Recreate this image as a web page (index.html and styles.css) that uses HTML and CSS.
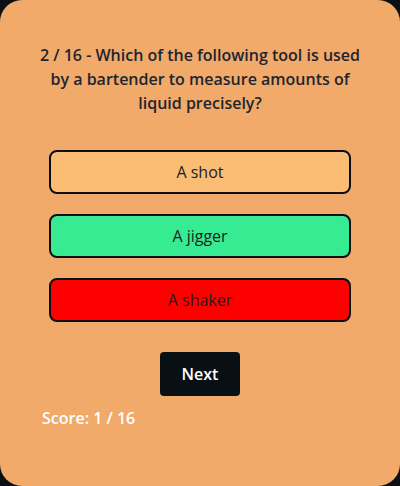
FILE: index.html
```html
<!DOCTYPE html>
<html>
<head>
<meta charset="utf-8">
<link rel="stylesheet" href="styles.css">
</head>
<body>
<div class="card">
  <h1 class="question">2 / 16 - Which of the following tool is used by a bartender to measure amounts of liquid precisely?</h1>
  <div class="options">
    <button class="option neutral">A shot</button>
    <button class="option correct">A jigger</button>
    <button class="option wrong">A shaker</button>
  </div>
  <div class="actions">
    <button class="next">Next</button>
  </div>
  <p class="score">Score: 1 / 16</p>
</div>
</body>
</html>
```
FILE: styles.css
```css
html, body {
  margin: 0;
  padding: 0;
  background: #0a1014;
  height: 100%;
}
body {
  font-family: "Open Sans", "Noto Sans", sans-serif;
}
.card {
  box-sizing: border-box;
  width: 400px;
  height: 486px;
  background: #f1aa6a;
  border-radius: 22px;
  padding: 43px 40px;
}
.question {
  margin: 0;
  font-size: 16px;
  font-weight: 600;
  line-height: 24px;
  text-align: center;
  color: #1d2530;
}
.options {
  display: flex;
  flex-direction: column;
  align-items: center;
  gap: 20px;
  margin-top: 35px;
}
.option {
  box-sizing: border-box;
  width: 302px;
  height: 44px;
  border: 2px solid #0a1014;
  border-radius: 8px;
  font-family: inherit;
  font-size: 16px;
  color: #1a1f26;
}
.neutral { background: #fbbc74; }
.correct { background: #36eb91; }
.wrong { background: #ff0000; }
.actions {
  display: flex;
  justify-content: center;
  margin-top: 30px;
}
.next {
  width: 80px;
  height: 44px;
  border: none;
  border-radius: 4px;
  background: #081014;
  color: #ffffff;
  font-family: inherit;
  font-size: 16px;
  font-weight: 600;
}
.score {
  margin: 10px 2px 0;
  font-size: 16px;
  font-weight: 600;
  line-height: 24px;
  color: #ffffff;
}
```
